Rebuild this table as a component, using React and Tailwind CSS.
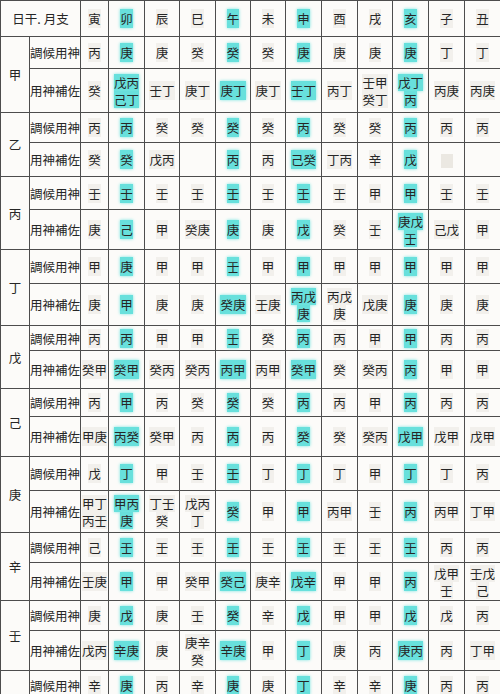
import React from "react";

const months = ["寅", "卯", "辰", "巳", "午", "未", "申", "酉", "戌", "亥", "子", "丑"];
const hiCols = [1, 4, 6, 9];
const colW = [29, 51, 28, 36, 35, 36, 35, 35, 36, 36, 35, 36, 36, 36];

const groups = [
  {
    stem: "甲",
    h: [32, 44],
    a: ["丙", "庚", "庚", "癸", "癸", "癸", "庚", "庚", "庚", "庚", "丁", "丁"],
    b: ["癸", "戊丙/己丁", "壬丁", "庚丁", "庚丁", "庚丁", "壬丁", "丙丁", "壬甲/癸丁", "戊丁/丙", "丙庚", "丙庚"],
  },
  {
    stem: "乙",
    h: [30, 34],
    a: ["丙", "丙", "癸", "癸", "癸", "癸", "丙", "癸", "癸", "丙", "丙", "丙"],
    b: ["癸", "癸", "戊丙", "", "丙", "丙", "己癸", "丁丙", "辛", "戊", "#", ""],
  },
  {
    stem: "丙",
    h: [33, 40],
    a: ["壬", "壬", "壬", "壬", "壬", "壬", "壬", "壬", "甲", "甲", "壬", "壬"],
    b: ["庚", "己", "甲", "癸庚", "庚", "庚", "戊", "癸", "壬", "庚戊/壬", "己戊", "甲"],
  },
  {
    stem: "丁",
    h: [34, 42],
    a: ["甲", "庚", "甲", "甲", "壬", "甲", "甲", "甲", "甲", "甲", "甲", "甲"],
    b: ["庚", "甲", "庚", "庚", "癸庚", "壬庚", "丙戊/庚", "丙戊/庚", "戊庚", "庚", "庚", "庚"],
  },
  {
    stem: "戊",
    h: [25, 38],
    a: ["丙", "丙", "甲", "甲", "壬", "癸", "丙", "丙", "甲", "甲", "丙", "丙"],
    b: ["癸甲", "癸甲", "癸丙", "癸丙", "丙甲", "丙甲", "癸甲", "癸", "癸丙", "丙", "甲", "甲"],
  },
  {
    stem: "己",
    h: [28, 40],
    a: ["丙", "甲", "丙", "癸", "癸", "癸", "丙", "丙", "甲", "丙", "丙", "丙"],
    b: ["甲庚", "丙癸", "癸甲", "丙", "丙", "丙", "癸", "癸", "癸丙", "戊甲", "戊甲", "戊甲"],
  },
  {
    stem: "庚",
    h: [34, 42],
    a: ["戊", "丁", "甲", "壬", "壬", "丁", "丁", "丁", "甲", "丁", "丁", "丙"],
    b: ["甲丁/丙壬", "甲丙/庚", "丁壬/癸", "戊丙/丁", "癸", "甲", "甲", "丙甲", "壬", "丙", "丙甲", "丁甲"],
  },
  {
    stem: "辛",
    h: [30, 38],
    a: ["己", "壬", "壬", "壬", "壬", "壬", "壬", "壬", "壬", "壬", "丙", "丙"],
    b: ["壬庚", "甲", "甲", "癸甲", "癸己", "庚辛", "戊辛", "甲", "甲", "丙", "戊甲/壬", "壬戊/己"],
  },
  {
    stem: "壬",
    h: [30, 40],
    a: ["庚", "戊", "庚", "壬", "癸", "辛", "戊", "甲", "甲", "戊", "戊", "丙"],
    b: ["戊丙", "辛庚", "庚", "庚辛/癸", "辛庚", "甲", "丁", "庚", "丙", "庚丙", "丙", "丁甲"],
  },
  {
    stem: "癸",
    h: [30, 40],
    a: ["辛", "庚", "丙", "辛", "庚", "庚", "丁", "辛", "辛", "庚", "丙", "丙"],
    b: ["庚", "丁", "庚", "丙", "庚丙", "丙", "丁甲", "丙", "丙", "丁", "丙", "丙"],
  },
];

const cellCls =
  "border-[1.5px] border-[#4d4d4d] bg-[#fcfbf9] p-0 text-center align-middle text-[12.5px] leading-[17px] text-[#262626]";

function Txt({ v, hi }) {
  if (v === "") return null;
  if (v === "#")
    return <span className="inline-block h-[14px] w-[12px] bg-[#ebe8e2] align-middle" />;
  const parts = v.split("/");
  if (parts.length > 1) {
    return (
      <span className="inline-flex flex-col items-center">
        {parts.map((p, i) => (
          <span
            key={i}
            className={
              "block leading-[17px] " +
              (hi ? "bg-[#68e0dc] shadow-[0_0_3px_#7ae6e2]" : "bg-[#f2f0ec]")
            }
          >
            {p}
          </span>
        ))}
      </span>
    );
  }
  const cls = hi ? "bg-[#68e0dc] shadow-[0_0_3px_#7ae6e2]" : "bg-[#f2f0ec]";
  return <span className={cls}>{v}</span>;
}

export default function App() {
  return (
    <div
      className="h-[694px] w-[500px] overflow-hidden bg-white"
      style={{ fontFamily: '"Noto Sans CJK TC", "Noto Sans CJK SC", sans-serif' }}
    >
      <table className="w-[500px] table-fixed border-collapse">
        <colgroup>
          {colW.map((w, i) => (
            <col key={i} style={{ width: w }} />
          ))}
        </colgroup>
        <tbody>
          <tr className="h-[36px]">
            <td colSpan={2} className={cellCls}>
              日干. 月支
            </td>
            {months.map((m, i) => (
              <td key={m} className={cellCls}>
                <Txt v={m} hi={hiCols.includes(i)} />
              </td>
            ))}
          </tr>
          {groups.map((g) => (
            <React.Fragment key={g.stem}>
              <tr style={{ height: g.h[0] }}>
                <td rowSpan={2} className={cellCls + " text-[#333]"}>
                  {g.stem}
                </td>
                <td className={cellCls}>調候用神</td>
                {g.a.map((v, i) => (
                  <td key={i} className={cellCls}>
                    <Txt v={v} hi={hiCols.includes(i)} />
                  </td>
                ))}
              </tr>
              <tr style={{ height: g.h[1] }}>
                <td className={cellCls}>用神補佐</td>
                {g.b.map((v, i) => (
                  <td key={i} className={cellCls}>
                    <Txt v={v} hi={hiCols.includes(i)} />
                  </td>
                ))}
              </tr>
            </React.Fragment>
          ))}
        </tbody>
      </table>
    </div>
  );
}
